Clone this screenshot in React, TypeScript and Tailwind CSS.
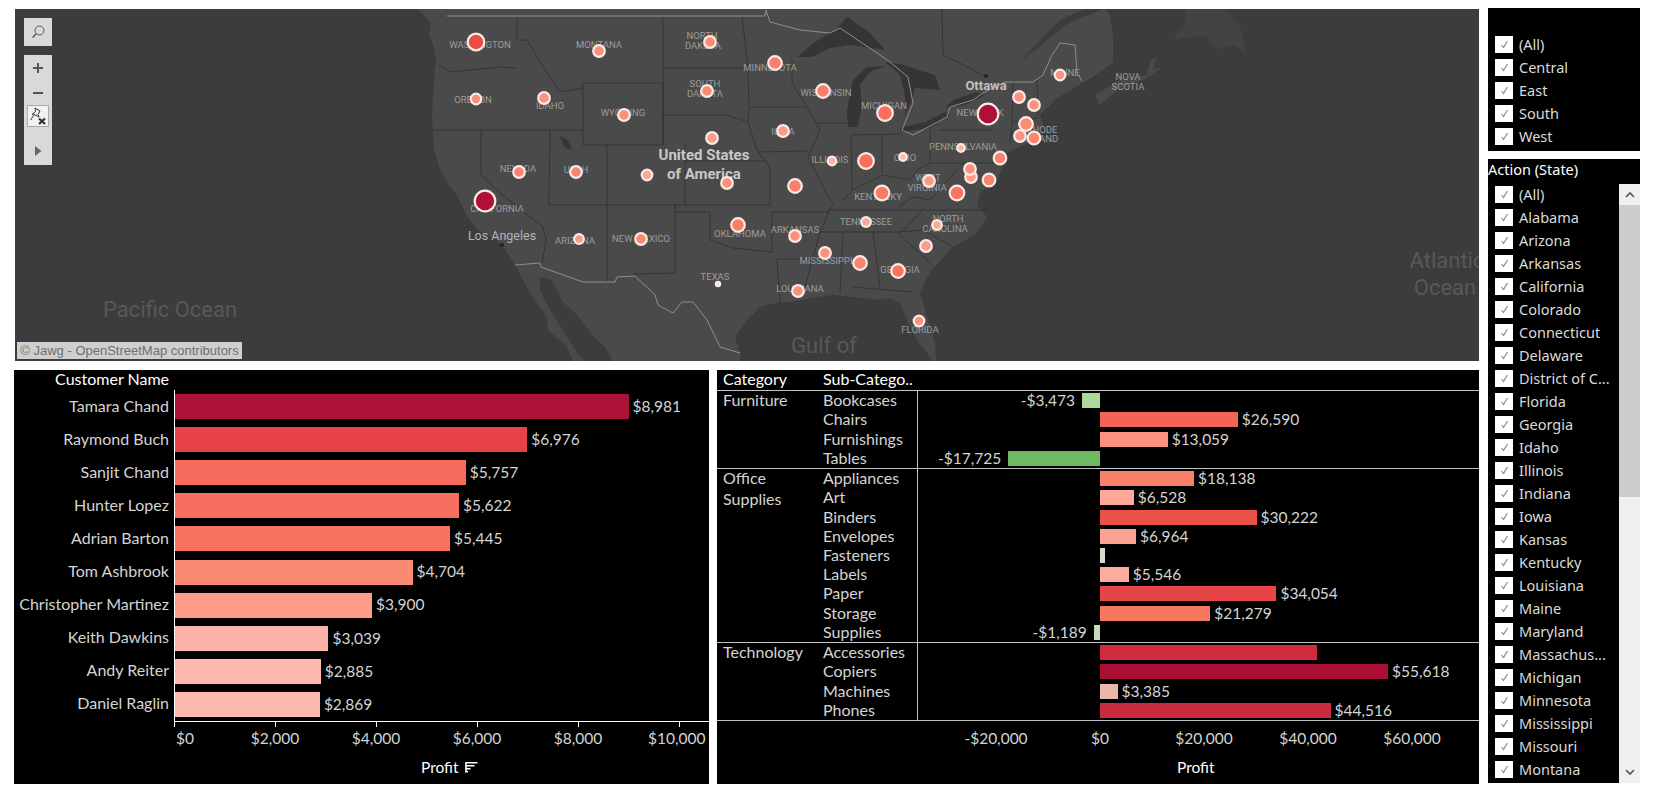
import React from "react";

const chartFont = { fontFamily: 'Lato, "Noto Sans", sans-serif' };

const customers = [
  { n: "Tamara Chand", v: 8981, c: "#ab1236" },
  { n: "Raymond Buch", v: 6976, c: "#e64247" },
  { n: "Sanjit Chand", v: 5757, c: "#f66b5b" },
  { n: "Hunter Lopez", v: 5622, c: "#f76f5e" },
  { n: "Adrian Barton", v: 5445, c: "#f8735f" },
  { n: "Tom Ashbrook", v: 4704, c: "#fb8a74" },
  { n: "Christopher Martinez", v: 3900, c: "#fd9d89" },
  { n: "Keith Dawkins", v: 3039, c: "#feb3a8" },
  { n: "Andy Reiter", v: 2885, c: "#feb8ad" },
  { n: "Daniel Raglin", v: 2869, c: "#feb9ae" },
];

type Sub = { n: string; v: number; c: string; nolabel?: boolean };
const groups: { cat: string[]; h: string; rows: Sub[] }[] = [
  {
    cat: ["Furniture"],
    h: "h-[78px]",
    rows: [
      { n: "Bookcases", v: -3473, c: "#acd89c" },
      { n: "Chairs", v: 26590, c: "#f26457" },
      { n: "Furnishings", v: 13059, c: "#fb927d" },
      { n: "Tables", v: -17725, c: "#6fb963" },
    ],
  },
  {
    cat: ["Office", "Supplies"],
    h: "h-[174px]",
    rows: [
      { n: "Appliances", v: 18138, c: "#f98069" },
      { n: "Art", v: 6528, c: "#fda898" },
      { n: "Binders", v: 30222, c: "#ec5149" },
      { n: "Envelopes", v: 6964, c: "#fda391" },
      { n: "Fasteners", v: 950, c: "#dcd8cb", nolabel: true },
      { n: "Labels", v: 5546, c: "#fdab9d" },
      { n: "Paper", v: 34054, c: "#e64548" },
      { n: "Storage", v: 21279, c: "#f7775f" },
      { n: "Supplies", v: -1189, c: "#c3dfb7" },
    ],
  },
  {
    cat: ["Technology"],
    h: "h-[78px]",
    rows: [
      { n: "Accessories", v: 41937, c: "#d02c40", nolabel: true },
      { n: "Copiers", v: 55618, c: "#a91034" },
      { n: "Machines", v: 3385, c: "#ebb7a8" },
      { n: "Phones", v: 44516, c: "#ca2a3e" },
    ],
  },
];

const fmt = (v: number) => (v < 0 ? "-$" : "$") + Math.abs(v).toLocaleString("en-US");

const regions = ["(All)", "Central", "East", "South", "West"];
const states = [
  "(All)", "Alabama", "Arizona", "Arkansas", "California", "Colorado", "Connecticut", "Delaware", "District of C...",
  "Florida", "Georgia", "Idaho", "Illinois", "Indiana", "Iowa", "Kansas", "Kentucky", "Louisiana", "Maine", "Maryland",
  "Massachus...", "Michigan", "Minnesota", "Mississippi", "Missouri", "Montana",
];

const pins: [number, number, number, string][] = [
  [476, 42, 8, "#ee4c48"], [476, 99, 5, "#f98f7a"], [485, 201, 10, "#b01038"],
  [599, 51, 5.5, "#fa8f7a"], [710, 42, 5.5, "#fa8a74"], [775, 63, 6.5, "#f97f69"], [823, 91, 6.5, "#f97f69"],
  [544, 98, 5.5, "#fb9280"], [707, 91, 5.5, "#fa8a74"], [624, 115, 5.5, "#fa8f7a"], [783, 131, 5.5, "#fb9a86"],
  [885, 113, 7.5, "#f96f5e"], [712, 138, 5.5, "#fb9a86"], [519, 172, 5.5, "#f98470"], [576, 172, 5.5, "#f98470"],
  [647, 175, 5, "#fca898"], [727, 183, 5.5, "#fa907c"], [795, 186, 6.5, "#f97f69"], [832, 161, 4, "#fcb3a6"],
  [866, 161, 7.5, "#f96f5e"], [903, 157, 3.5, "#fdb9ae"], [961, 148, 3.5, "#fcb3a6"], [882, 193, 7, "#f97a66"],
  [929, 181, 5.5, "#fb9a86"], [957, 193, 7, "#f8745f"], [937, 225, 4.5, "#fca898"], [866, 222, 4.5, "#fca898"],
  [738, 225, 6.5, "#f97f69"], [795, 236, 5.5, "#fa907c"], [641, 239, 5.5, "#fa8a74"], [579, 239, 4.5, "#fb9a86"],
  [926, 246, 5.5, "#fb9a86"], [825, 253, 5.5, "#fa907c"], [860, 263, 6.5, "#f98470"], [898, 271, 6.5, "#f8745f"],
  [798, 291, 5.5, "#fa907c"], [718, 284, 1.8, "#e0e0e0"], [919, 321, 5, "#fb9280"],
  [971, 177, 5.5, "#fb9a86"], [970, 169, 5.5, "#fa907c"], [989, 180, 6, "#f98470"], [1000, 158, 6, "#f98470"],
  [988, 114, 10, "#b01038"], [1060, 75, 5, "#fb9280"], [1019, 97, 5.5, "#fb9280"], [1034, 105, 5.5, "#fb9280"],
  [1020, 136, 5.5, "#fb9280"], [1026, 124, 6.5, "#fa8a74"], [1034, 138, 6, "#f98470"],
];

const stateLines = [
  "437,63 450,72 500,67 516,68",
  "432,130 583,130",
  "481,130 481,175 500,193 543,227 546,240 542,263",
  "550,130 549,205",
  "549,205 770,205",
  "607,145 607,282",
  "583,83 663,83 663,145 583,145 583,83",
  "517,17 517,40 527,40 545,70 560,92 583,88",
  "663,17 663,145",
  "663,68 748,68",
  "663,115 727,115 748,122 757,150 767,163 770,170 770,205",
  "742,17 748,68 749,107 748,122",
  "685,145 685,205",
  "685,161 767,161",
  "675,205 675,212 710,212 710,240 733,248 772,252 772,212",
  "675,205 675,273 633,274",
  "749,107 807,107 820,130 808,157 828,197 833,203 828,213 820,233 813,257 805,287",
  "758,152 807,151",
  "792,60 792,83 807,107",
  "815,123 850,123",
  "851,135 852,190 843,200",
  "772,212 830,212",
  "777,259 813,259",
  "777,259 780,302",
  "828,210 987,210",
  "820,232 902,232",
  "843,233 840,293",
  "873,232 880,287",
  "852,287 913,292",
  "898,233 930,263",
  "900,232 923,230 953,247",
  "902,232 925,207",
  "882,135 882,173",
  "852,135 900,134",
  "852,190 883,175 910,180 917,170 930,163",
  "930,130 930,163 993,163",
  "940,130 993,130",
  "898,207 913,197 930,200 957,170",
  "1013,83 1012,122 1010,145",
  "1037,80 1038,115",
  "1012,122 1038,118",
  "1011,133 1043,130",
  "942,9 943,55 970,68 985,77",
];

const mapLabels: [string, number, number][] = [
  ["WASHINGTON", 480, 48], ["MONTANA", 599, 48], ["NORTH", 702, 39], ["DAKOTA", 703, 49], ["MINNESOTA", 770, 71],
  ["WISCONSIN", 826, 96], ["MICHIGAN", 884, 109], ["SOUTH", 705, 87], ["DAKOTA", 705, 97], ["OREGON", 473, 103],
  ["IDAHO", 550, 109], ["WYOMING", 623, 116], ["IOWA", 783, 135], ["NEVADA", 518, 172], ["UTAH", 576, 173],
  ["ILLINOIS", 830, 163], ["OHIO", 905, 161], ["PENNSYLVANIA", 963, 150], ["NEW YORK", 980, 116], ["KENTUCKY", 878, 200],
  ["WEST", 928, 181], ["VIRGINIA", 927, 191], ["TENNESSEE", 866, 225], ["NORTH", 948, 222], ["CAROLINA", 945, 232],
  ["OKLAHOMA", 740, 237], ["ARKANSAS", 795, 233], ["NEW MEXICO", 641, 242], ["ARIZONA", 575, 244], ["MISSISSIPPI", 826, 264],
  ["GEORGIA", 900, 273], ["LOUISIANA", 800, 292], ["TEXAS", 715, 280], ["FLORIDA", 920, 333], ["CALIFORNIA", 497, 212],
  ["MAINE", 1065, 76], ["RHODE", 1042, 133], ["ISLAND", 1042, 142], ["NOVA", 1128, 80], ["SCOTIA", 1128, 90],
];

function MapCanvas() {
  return (
    <svg viewBox="15 9 1464 352" width="1464" height="352" className="block" style={{ fontFamily: "Roboto, sans-serif" }}>
      <rect x="15" y="9" width="1464" height="352" fill="#3c3c3c" />
      <polygon
        fill="#4b4a4a"
        points="417,9 425,16 431,24 429,34 433,44 436,60 434,80 432,117 434,150 440,170 450,187 456,194 468,218 480,232 497,240 502,245 515,265 530,293 547,317 548,330 567,347 573,361 740,361 740,353 735,337 747,320 760,307 780,302 790,302 817,297 833,295 880,300 890,298 900,303 908,323 917,340 927,353 933,361 936,361 935,343 925,310 920,293 930,272 952,248 977,233 987,218 982,210 977,205 980,192 997,182 1007,152 1020,147 1037,138 1043,125 1040,115 1057,98 1093,77 1113,62 1113,35 1110,15 1105,9"
      />
      <polygon fill="#3c3c3c" points="540,277 552,280 563,302 577,315 597,340 605,347 613,361 585,361 577,353 563,330 550,310 540,290" />
      <polygon fill="#3c3c3c" points="1020,62 1050,38 1070,22 1093,13 1105,9 1085,9 1060,20 1035,45" />
      <polygon fill="#4b4a4a" points="1095,95 1100,105 1120,88 1143,80 1163,67 1152,70 1158,55 1150,62 1147,75 1120,80" />
      <polygon fill="#444343" points="1173,40 1186,20 1186,9 1225,9 1240,25 1247,55 1235,45 1215,50 1205,35" />
      <g fill="#353535">
        <polygon points="797,57 815,42 835,30 847,17 870,33 885,50 870,48 850,45 830,48 812,57" />
        <polygon points="848,127 847,110 853,80 867,67 885,66 870,72 860,85 862,105 858,127" />
        <polygon points="885,62 900,64 935,75 940,90 915,88 912,100 905,115 905,95 900,75" />
        <polygon points="902,132 900,128 925,122 945,112 950,115 930,128" />
        <polygon points="945,108 953,100 977,92 985,95 965,105" />
        <polygon points="560,136 568,140 572,150 565,148" />
      </g>
      <g fill="none" stroke="#303030" strokeWidth="0.8">
        {stateLines.map((p, i) => (
          <polyline key={i} points={p} />
        ))}
      </g>
      <g fill="none" stroke="#8e8e8e" strokeWidth="1">
        <polyline points="447,16 765,16 766,10 770,22 800,30 830,33 840,28 883,57 890,62 908,77 913,103 902,130 913,135 947,117 950,107 973,100 983,93 1005,82 1033,82 1043,75 1052,55 1060,43 1075,45 1077,72 1082,81" />
        <polyline points="515,265 540,263 541,267 583,282 615,282 617,277 635,276 655,295 658,305 673,313 682,302 693,302 707,320 720,347 740,353" />
      </g>
      <g fill="#9c9c9c" fontSize="9.5" textAnchor="middle">
        {mapLabels.map(([t, x, y], i) => (
          <text key={i} x={x} y={y}>
            {t}
          </text>
        ))}
      </g>
      <circle cx="502" cy="245" r="2" fill="#222" />
      <circle cx="986" cy="76" r="2" fill="#222" />
      <g fill="#585858" fontSize="22" textAnchor="middle">
        <text x="170" y="317">Pacific Ocean</text>
        <text x="824" y="353">Gulf of</text>
        <text x="1447" y="268">Atlantic</text>
        <text x="1445" y="295">Ocean</text>
      </g>
      <g fill="#c8c8c8" fontSize="15" fontWeight="700" textAnchor="middle">
        <text x="704" y="160">United States</text>
        <text x="704" y="179">of America</text>
      </g>
      <text x="986" y="90" fill="#c0c0c0" fontSize="13" fontWeight="700" textAnchor="middle">Ottawa</text>
      <text x="502" y="240" fill="#b4b4b4" fontSize="12.5" textAnchor="middle">Los Angeles</text>
      {pins.map(([x, y, r, c], i) => (
        <circle key={i} cx={x} cy={y} r={r + 0.3} fill={c} stroke="#fbeae4" strokeWidth="2.2" />
      ))}
    </svg>
  );
}

function MapControls() {
  return (
    <>
      <div className="absolute left-[9px] top-[9px] flex h-[28px] w-[28px] items-center justify-center bg-[#d9d9d9]">
        <svg width="16" height="16" viewBox="0 0 16 16" fill="none" stroke="#555" strokeWidth="1">
          <circle cx="9.5" cy="6.5" r="4.5" />
          <path d="M6.3 9.7 2.5 13.5" strokeWidth="1.4" />
        </svg>
      </div>
      <div className="absolute left-[9px] top-[46px] flex h-[110px] w-[28px] flex-col items-center bg-[#d9d9d9]">
        <div className="flex h-[26px] items-center justify-center">
          <svg width="12" height="12" viewBox="0 0 12 12" stroke="#555" strokeWidth="2">
            <path d="M1 6h10M6 1v10" />
          </svg>
        </div>
        <div className="flex h-[24px] items-center justify-center">
          <svg width="12" height="12" viewBox="0 0 12 12" stroke="#555" strokeWidth="2">
            <path d="M1 6h10" />
          </svg>
        </div>
        <div className="flex h-[22px] w-[22px] items-center justify-center border border-[#aaa] bg-[#f2f2f2]">
          <svg width="20" height="20" viewBox="0 0 20 20" fill="none" stroke="#333" strokeWidth="1">
            <path d="M7 2 12 5 10 8.5 11 11 5.5 8 4 8.5 7.5 5.5Z" />
            <path d="M6 9 2.5 14" />
            <path d="M11 12.5 17 18M17 12.5 11 18" strokeWidth="2.2" />
          </svg>
        </div>
        <div className="mt-[10px] flex h-[28px] items-center justify-center">
          <svg width="8" height="12" viewBox="0 0 8 12" fill="#666">
            <path d="M1 1 7.5 6 1 11Z" />
          </svg>
        </div>
      </div>
      <div
        className="absolute bottom-[2px] left-[2px] flex h-[17px] w-[225px] items-center justify-center bg-[#cfcfcf] text-[13px] text-[#707070]"
        style={{ fontFamily: '"Liberation Sans", sans-serif' }}
      >
        © Jawg - OpenStreetMap contributors
      </div>
    </>
  );
}

function CustomerChart() {
  return (
    <div className="flex h-[414px] w-[695px] flex-col bg-black text-[15.5px] text-[#d4d4d4]" style={chartFont}>
      <div className="flex h-[20px] w-[155px] items-center justify-end pb-[2px] text-[16px] text-white">Customer Name</div>
      <div className="flex h-[331px] flex-col">
        {customers.map((r) => (
          <div key={r.n} className="flex flex-1 items-center">
            <div className="w-[155px] whitespace-nowrap pb-[2px] text-right text-[16px]">{r.n}</div>
            <div className="ml-[5px] flex h-full items-center border-l border-white">
              <div className="h-[25px]" style={{ width: r.v * 0.0505, background: r.c }} />
              <span className="ml-[4px]">{fmt(r.v)}</span>
            </div>
          </div>
        ))}
      </div>
      <div className="ml-[160px] grid grid-cols-[101px_101px_101px_101px_101px_30px] border-t border-white leading-[16px]">
        {[0, 2000, 4000, 6000, 8000, 10000].map((t, i) => (
          <div key={t} className="h-[26px]">
            <div className="h-[5px] w-px bg-white" />
            <div
              className={
                "mt-[3px] whitespace-nowrap " +
                (i === 0 ? "ml-[2px]" : i === 5 ? "-translate-x-[31px]" : "w-fit -translate-x-1/2")
              }
            >
              {fmt(t)}
            </div>
          </div>
        ))}
      </div>
      <div className="mt-[11px] flex items-center gap-[6px] pl-[407px] leading-[16px] text-white">
        <span>Profit</span>
        <svg width="13" height="11" viewBox="0 0 13 11" fill="none" stroke="#fff" strokeWidth="1.6">
          <path d="M.5.8h12M.5 3.8h9M.5 6.8h5M.5 9.8h2.5M.9.5v10" />
        </svg>
      </div>
    </div>
  );
}

function CategoryChart() {
  return (
    <div className="flex h-[414px] w-[763px] flex-col bg-black text-[15.5px] text-[#d4d4d4]" style={chartFont}>
      <div className="flex h-[21px] items-center border-b border-[#c4c4c4] pb-[2px] text-[16px] text-white">
        <div className="w-[106px] pl-[6px]">Category</div>
        <div className="whitespace-nowrap">Sub-Catego..</div>
      </div>
      {groups.map((g) => (
        <div key={g.cat[0]} className={"flex border-b border-[#c4c4c4] " + g.h}>
          <div className="-mt-[2px] w-[106px] pl-[6px] text-[16px] leading-[21px]">
            {g.cat.map((c) => (
              <div key={c}>{c}</div>
            ))}
          </div>
          <div className="flex min-h-0 flex-1 flex-col leading-[15px]">
            {g.rows.map((r) => (
              <div key={r.n} className="flex min-h-0 flex-1 items-center">
                <div className="flex w-[95px] items-center self-stretch whitespace-nowrap border-r border-[#c4c4c4] pb-[2px] text-[16px]">{r.n}</div>
                <div className="flex h-[15px] w-[182px] items-center justify-end">
                  {r.v < 0 && (
                    <>
                      <span className="mr-[7px] whitespace-nowrap">{fmt(r.v)}</span>
                      <div className="h-[15px]" style={{ width: -r.v * 0.00518, background: r.c }} />
                    </>
                  )}
                </div>
                <div className="flex h-[15px] items-center">
                  {r.v > 0 && (
                    <>
                      <div className="h-[15px]" style={{ width: r.v * 0.00518, background: r.c }} />
                      {!r.nolabel && <span className="ml-[4px] whitespace-nowrap">{fmt(r.v)}</span>}
                    </>
                  )}
                </div>
              </div>
            ))}
          </div>
        </div>
      ))}
      <div className="ml-[279px] mt-[9px] grid grid-cols-[104px_104px_104px_104px_60px] leading-[16px]">
        {[-20000, 0, 20000, 40000, 60000].map((t) => (
          <div key={t} className="w-fit -translate-x-1/2 whitespace-nowrap">
            {fmt(t)}
          </div>
        ))}
      </div>
      <div className="mt-[13px] pl-[460px] leading-[16px] text-white">
        <span className="block w-fit">Profit</span>
      </div>
    </div>
  );
}

function Check() {
  return (
    <div className="flex h-[17px] w-[18px] shrink-0 items-center justify-center bg-white">
      <svg width="9" height="9" viewBox="0 0 9 9" fill="none" stroke="#8a8a8a" strokeWidth="1.2">
        <path d="M1.5 5 3.5 7.5 7.5 1" />
      </svg>
    </div>
  );
}

function FilterRow({ label }: { label: string }) {
  return (
    <div className="flex h-[23px] items-start gap-[6px] whitespace-nowrap pl-[7px] text-[14.5px] leading-[17px] text-[#dadada]">
      <Check />
      <span>{label}</span>
    </div>
  );
}

function Filters() {
  const font = { fontFamily: '"Noto Sans", sans-serif' };
  return (
    <div className="flex w-[152px] flex-col gap-[8px]" style={font}>
      <div className="h-[143px] bg-black pt-[28px]">
        {regions.map((r) => (
          <FilterRow key={r} label={r} />
        ))}
      </div>
      <div className="flex h-[624px] flex-col overflow-hidden bg-black">
        <div className="h-[25px] shrink-0 text-[14.5px] leading-[21px] text-white">Action (State)</div>
        <div className="flex min-h-0 flex-1">
          <div className="w-[131px] overflow-hidden pt-[2px]">
            {states.map((s) => (
              <FilterRow key={s} label={s} />
            ))}
          </div>
          <div className="flex w-[21px] flex-col items-center bg-[#f0f0f0]">
            <div className="flex h-[21px] items-center justify-center">
              <svg width="10" height="7" viewBox="0 0 10 7" fill="none" stroke="#555" strokeWidth="1.6">
                <path d="M1 6 5 2l4 4" />
              </svg>
            </div>
            <div className="h-[292px] w-full bg-[#cdcdcd]" />
            <div className="mt-auto flex h-[21px] items-center justify-center">
              <svg width="10" height="7" viewBox="0 0 10 7" fill="none" stroke="#555" strokeWidth="1.6">
                <path d="M1 1l4 4 4-4" />
              </svg>
            </div>
          </div>
        </div>
      </div>
    </div>
  );
}

export default function App() {
  return (
    <div className="flex h-[803px] w-[1657px] gap-[9px] overflow-hidden bg-white pl-[14px] pt-[8px]">
      <div className="flex w-[1465px] shrink-0 flex-col gap-[9px] pt-[1px]">
        <div className="relative ml-[1px] h-[352px] w-[1464px] overflow-hidden">
          <MapCanvas />
          <MapControls />
        </div>
        <div className="flex gap-[8px]">
          <CustomerChart />
          <CategoryChart />
        </div>
      </div>
      <Filters />
    </div>
  );
}
